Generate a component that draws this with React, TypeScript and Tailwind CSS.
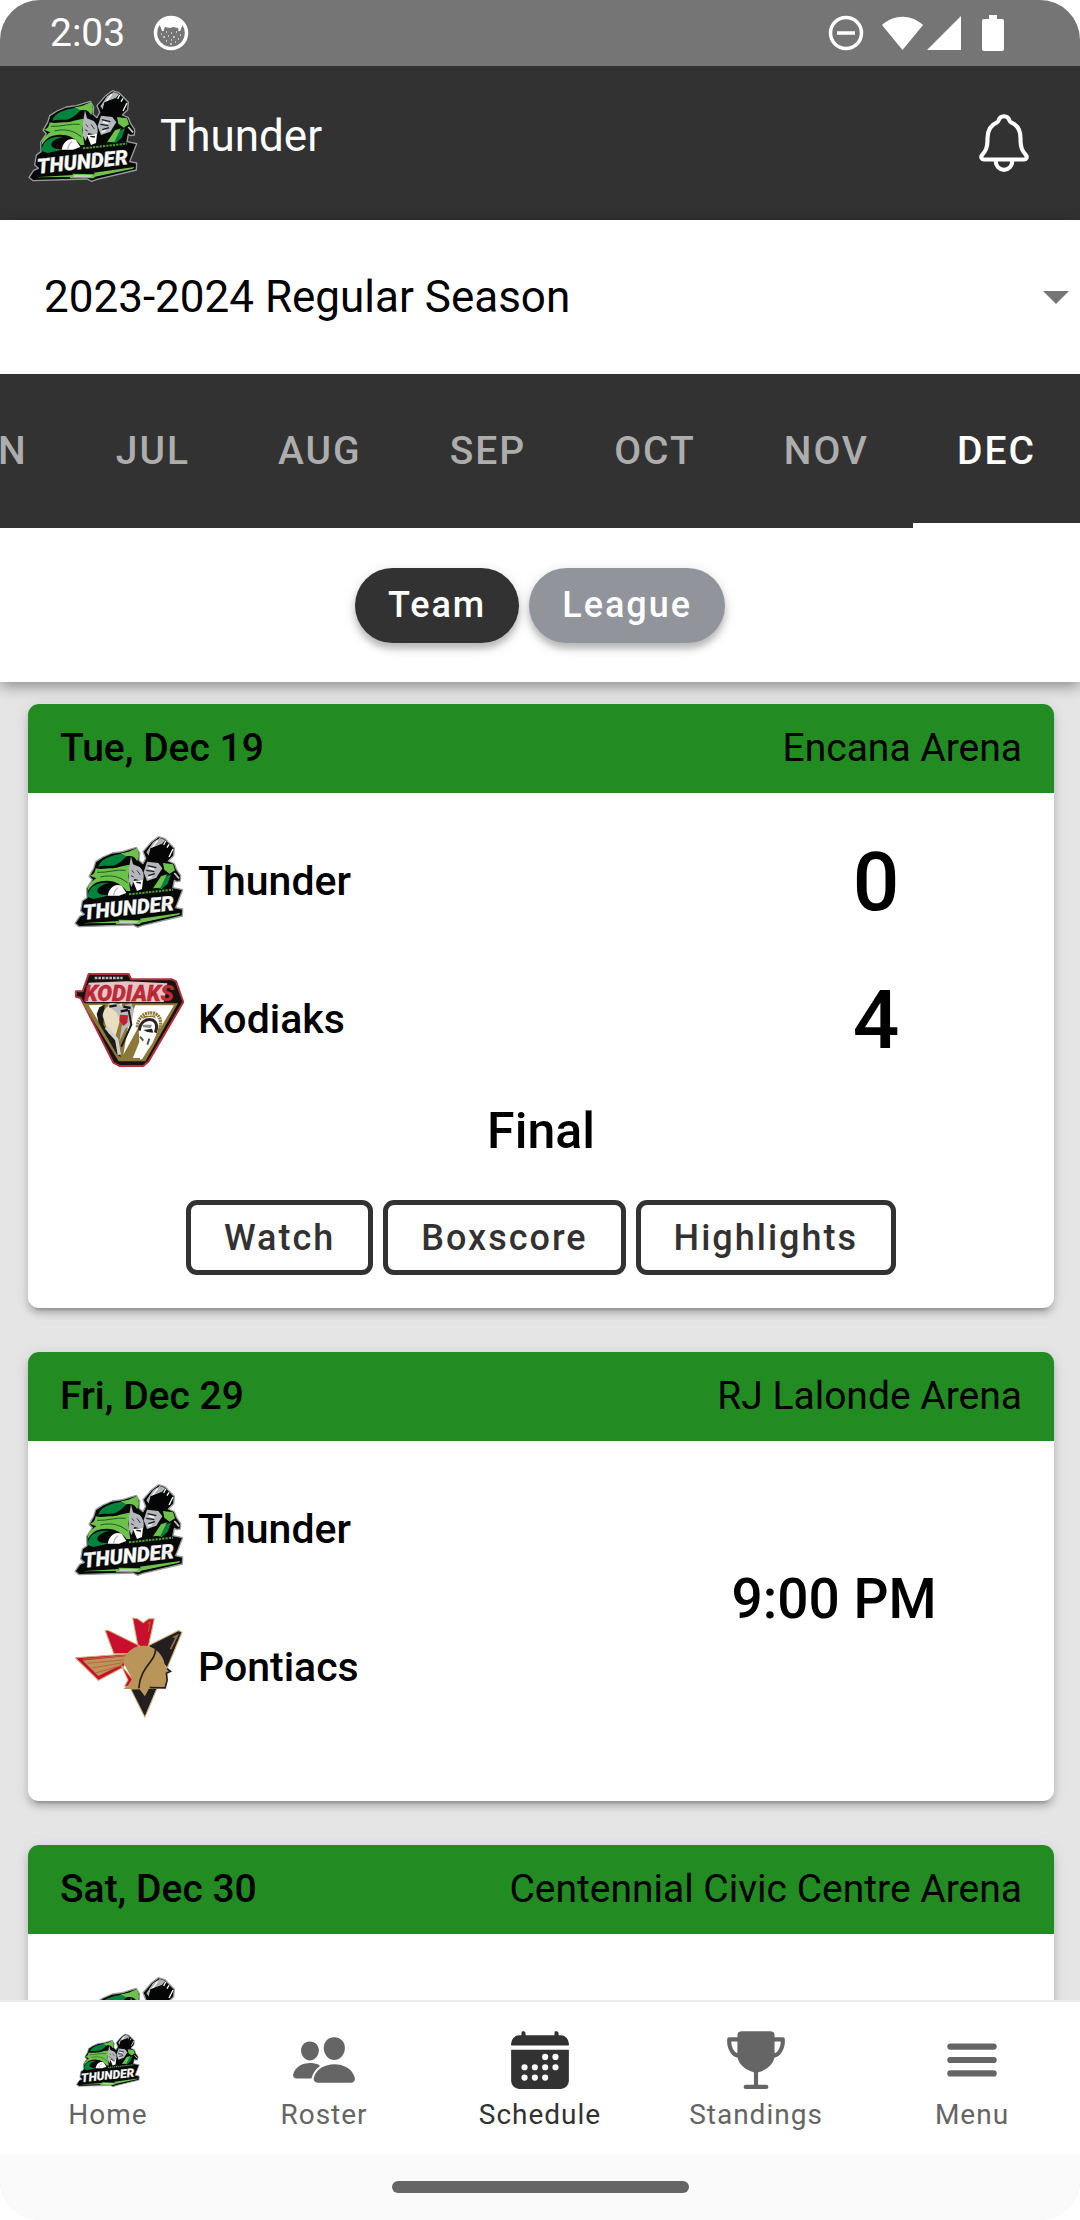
import { IoCalendar, IoMenu, IoNotificationsOutline, IoPeople, IoTrophy } from "react-icons/io5";
import type { ReactNode } from "react";

type LogoProps = { className: string };

function ThunderLogo({ className }: LogoProps) {
  return (
    <svg viewBox="25 28 330 280" className={className} role="img" aria-label="Thunder logo">
      <path
        d="M278 33L298 39L326 68L324 90L308 106L326 114L333 132L345 150L344 166L333 168L326 164L322 186L351 192L330 246L351 250L350 271L232 299L216 305L202 298L40 303L28 293L42 272L56 266L45 256L50 226L64 216L63 188L80 162L70 152L84 128L90 108L112 94L140 82L170 78L212 65L222 82L220 104L232 114L240 98L232 78L258 48Z"
        fill="#060806"
        stroke="#9a9da0"
        strokeWidth="4"
        strokeLinejoin="round"
      />
      <path d="M98 124C102 102 130 88 184 82L190 86C174 98 164 116 140 120C126 122 112 118 98 124Z" fill="#00843d" />
      <path d="M164 82C184 82 200 74 212 67C222 80 222 96 214 106C209 94 198 88 182 92Z" fill="#6cc24a" />
      <path
        d="M72 150C84 148 88 140 90 128C106 132 120 128 140 128C160 126 176 116 200 118L192 124L188 152L194 196L182 196C170 176 140 158 100 168C84 172 76 182 66 196C66 180 76 168 92 158Z"
        fill="#6cc24a"
      />
      <path d="M94 140C126 142 152 130 180 134M104 154C140 146 164 154 186 172" stroke="#1f5c22" strokeWidth="3" fill="none" />
      <path d="M66 214C66 186 92 168 130 172C100 178 90 192 98 202C106 210 120 206 126 210L84 220Z" fill="#00843d" />
      <path d="M126 210C130 186 148 172 168 180L182 202L160 210Z" fill="#fff" />
      <path d="M144 210C146 196 150 190 158 186" stroke="#b8bcc0" strokeWidth="4" fill="none" />
      <path d="M196 92L202 116L222 124C236 138 236 154 232 166L206 160L198 184L189 166L190 128Z" fill="#b4b8bc" />
      <path d="M202 166L232 163L229 190L214 196Z" fill="#fff" />
      <path d="M198 134L206 142M214 134L224 148M196 150L204 154" stroke="#333" strokeWidth="3" />
      <path d="M212 170L226 172" stroke="#111" strokeWidth="4" />
      <path d="M242 80L262 50L282 37L299 43L288 56L262 68L250 90Z" fill="#aeb2b6" />
      <path d="M276 44L252 76M300 46L294 58M310 56L304 66M322 70L310 94" stroke="#fff" strokeWidth="4" />
      <path d="M254 68L286 56L316 76L304 98L280 104L248 94Z" fill="#050505" />
      <path d="M244 108L278 112L290 128L272 156L244 166L234 140Z" fill="#b4b8bc" />
      <path d="M246 120L272 126M242 134L266 138M248 150L268 144" stroke="#1b1b1b" strokeWidth="4" />
      <path d="M250 127L266 131M246 157L258 153" stroke="#fff" strokeWidth="4" />
      <path d="M292 112L322 116L328 134L312 144L296 132Z" fill="#6cc24a" />
      <path d="M276 188L292 156L316 146L306 174L288 190Z" fill="#00843d" />
      <path d="M262 188L286 152L304 146L284 186Z" fill="#6cc24a" />
      <path d="M326 142L340 158" stroke="#c8ccd0" strokeWidth="5" />
      <path d="M190 206L322 192" stroke="#4f9a35" strokeWidth="6" strokeDasharray="7 3" />
      <text
        x="54"
        y="282"
        transform="rotate(-6 54 282)"
        fill="#fff"
        stroke="#c4c7ca"
        strokeWidth="1"
        className="font-['Roboto'] text-[62px] font-black italic"
      >
        THUNDER
      </text>
      <path d="M46 293L160 286L158 282L226 284L222 279L344 262L340 267L226 291L222 296L152 296L150 292Z" fill="#6cc24a" />
      <path d="M164 286L218 287L212 292L160 292Z" fill="#c8cbce" />
    </svg>
  );
}

function KodiaksLogo({ className }: LogoProps) {
  return (
    <svg viewBox="42 38 330 286" className={className} role="img" aria-label="Kodiaks logo">
      <path
        d="M86 44L206 44L214 60L336 60L348 66L370 128L266 306L250 320L178 320L160 310L62 116L48 112L48 96L68 96Z"
        fill="#17110f"
        stroke="#b3303c"
        strokeWidth="6"
        strokeLinejoin="round"
      />
      <path d="M104 56L188 56" stroke="#b9b9b9" strokeWidth="7" strokeDasharray="8 3" />
      <path d="M86 70L200 66L322 72L312 128L76 128Z" fill="#e8c4c6" />
      <text x="72" y="125" fill="#c52a38" stroke="#8d1c28" strokeWidth="1" className="font-['Roboto'] text-[66px] font-black italic">
        KODIAKS
      </text>
      <path d="M68 132L354 132L256 306L176 306Z" fill="#8d7838" />
      <path d="M86 138L128 136L116 168L124 200Z" fill="#fff" />
      <path d="M226 138L342 138L300 208L284 168L252 170L234 206L190 286L206 190Z" fill="#fff" />
      <path d="M118 144L134 136L130 196L148 224L174 252L182 294L170 284L116 190L110 164Z" fill="#1c1a17" />
      <path d="M128 170C130 146 148 134 168 138L186 132L184 168L166 232L146 222Z" fill="#e9dfc0" />
      <path d="M142 136C158 126 176 134 184 142L214 132L222 152L214 196L196 208L178 246L186 196L170 160Z" fill="#b9bbbd" />
      <path d="M148 142L170 138M190 142L212 146M182 156L204 152" stroke="#161616" strokeWidth="7" />
      <path d="M180 166L204 168L202 190L190 200L178 184Z" fill="#c3202f" />
      <path d="M138 204L170 240L178 286" stroke="#cfd0d2" strokeWidth="10" fill="none" />
      <path d="M206 152L214 196L184 262" stroke="#1c1a17" strokeWidth="6" fill="none" />
      <path d="M232 204C234 170 258 156 284 162C304 170 306 196 296 216" stroke="#8d7838" strokeWidth="10" fill="none" strokeDasharray="6 2" />
      <path d="M236 208C236 180 256 170 280 174C298 180 300 202 290 222L278 250L246 300L216 302L238 248Z" fill="#fff" />
      <path d="M238 214C240 188 258 176 278 182C292 190 292 206 286 220" fill="none" stroke="#2a2520" strokeWidth="9" />
      <path d="M246 196L276 196L272 206L250 204Z" fill="#8c8c8c" />
      <path d="M250 212L276 208L280 220L262 218Z" fill="#222" />
      <path d="M240 232L250 244M262 256L268 238" stroke="#555" strokeWidth="6" />
      <path d="M176 300L240 300" stroke="#8d7838" strokeWidth="8" />
    </svg>
  );
}

function PontiacsLogo({ className }: LogoProps) {
  return (
    <svg viewBox="46 54 326 306" className={className} role="img" aria-label="Pontiacs logo">
      <g stroke="#cfb078" strokeWidth="3" strokeLinejoin="round">
        <path d="M220 60L234 62L251 74L268 62L284 62L266 146L236 146Z" fill="#c8102e" />
        <path d="M138 96L150 98L240 142L206 166L164 166Z" fill="#c8102e" />
        <path d="M50 178L214 166L192 206L118 245Z" fill="#c8102e" />
        <path d="M186 200L220 242L206 264L196 262L206 244Z" fill="#c8102e" />
        <path d="M266 142L356 97L366 102L322 208L296 176Z" fill="#231f20" />
        <path d="M214 270L292 268L256 354Z" fill="#231f20" />
      </g>
      <path d="M72 186L210 172L188 198L118 232Z" fill="#ba955a" />
      <path d="M72 182L206 170M86 194L200 184M100 208L194 192M112 222L190 200" stroke="#c5603f" strokeWidth="3" />
      <path
        d="M192 192C198 158 226 140 256 142C284 144 304 164 312 186L316 204L330 216L320 224L322 242L316 268L270 266L256 292L240 270L192 270L212 254L218 240Z"
        fill="#ba955a"
      />
      <path d="M322 210L332 218L320 224L322 244L316 267L270 266" fill="none" stroke="#231f20" strokeWidth="5" />
      <path d="M288 150C290 188 242 204 238 268" fill="none" stroke="#231f20" strokeWidth="5" />
      <path d="M340 118L352 112L332 152" fill="none" stroke="#8d7442" strokeWidth="5" />
      <path d="M264 76L272 72L266 100" fill="none" stroke="#b3622e" strokeWidth="3" />
    </svg>
  );
}

const logos = { Thunder: ThunderLogo, Kodiaks: KodiaksLogo, Pontiacs: PontiacsLogo };

type Team = { name: keyof typeof logos; score?: number };
type Game = { date: string; arena: string; teams: Team[]; status?: string; time?: string; actions?: string[] };

const games: Game[] = [
  {
    date: "Tue, Dec 19",
    arena: "Encana Arena",
    teams: [
      { name: "Thunder", score: 0 },
      { name: "Kodiaks", score: 4 },
    ],
    status: "Final",
    actions: ["Watch", "Boxscore", "Highlights"],
  },
  { date: "Fri, Dec 29", arena: "RJ Lalonde Arena", teams: [{ name: "Thunder" }, { name: "Pontiacs" }], time: "9:00 PM" },
  { date: "Sat, Dec 30", arena: "Centennial Civic Centre Arena", teams: [{ name: "Thunder" }] },
];

function StatusBar() {
  return (
    <div className="flex h-[66px] shrink-0 items-center bg-[#757575] pr-[76px] pl-[50px] text-white">
      <span className="text-[39px]">2:03</span>
      <svg viewBox="0 0 36 36" className="ml-7 size-9">
        <circle cx="18" cy="18" r="15.5" fill="none" stroke="#fff" strokeWidth="3.5" />
        <path d="M6 9C11 2 25 2 30 9L27 16L25 13L20 12L17 13L12 12L10 16Z" fill="#fff" />
        <path d="M8 10L10 16M28 10L26 16" stroke="#fff" strokeWidth="2" />
        <path
          d="M8 19h1M13 17h1M18 18h1M23 17h1M27 20h1M10 22h2M15 21h1M20 22h2M25 24h1M13 26h1M18 25h1M22 27h1M17 29h2"
          stroke="#ddd"
          strokeWidth="1.5"
        />
      </svg>
      <svg viewBox="0 0 36 36" className="ml-auto size-9">
        <circle cx="18" cy="18" r="15.5" fill="none" stroke="#fff" strokeWidth="3.5" />
        <path d="M9 18H27" stroke="#fff" strokeWidth="3.5" />
      </svg>
      <svg viewBox="0 0 80 36" className="ml-[18px] h-9 w-20">
        <path d="M0 10C12 -1 29 -1 41 10L20.5 35Z" fill="#fff" />
        <path d="M79 1V35H45Z" fill="#fff" />
      </svg>
      <svg viewBox="0 0 22 36" className="ml-5 h-9 w-[22px]">
        <path d="M7 0H15V4H20Q22 4 22 6V34Q22 36 20 36H2Q0 36 0 34V6Q0 4 2 4H7Z" fill="#fff" />
      </svg>
    </div>
  );
}

function GameCard({ game }: { game: Game }) {
  return (
    <article className="overflow-hidden rounded-[11px] bg-white shadow-[0_8px_3px_-6px_rgba(0,0,0,0.2),0_6px_6px_0_rgba(0,0,0,0.14),0_3px_14px_0_rgba(0,0,0,0.12)]">
      <header className="flex h-[89px] items-center justify-between bg-[#228b22] px-8 text-[39px]">
        <h2 className="font-medium">{game.date}</h2>
        <span>{game.arena}</span>
      </header>
      <div className="flex items-center px-11 pt-5">
        <ul className="flex-1">
          {game.teams.map((team) => {
            const Logo = logos[team.name];
            return (
              <li key={team.name} className="flex h-[138px] items-center">
                <Logo className="ml-[2px] w-[110px]" />
                <span className="ml-[14px] text-[41px] font-medium">{team.name}</span>
                {team.score !== undefined && (
                  <span className="ml-auto w-2/7 text-center text-[82px] leading-none font-medium">{team.score}</span>
                )}
              </li>
            );
          })}
        </ul>
        {game.time && <span className="w-3/8 text-center text-[55px] font-medium">{game.time}</span>}
      </div>
      {game.status && <p className="mb-[27px] text-center text-[50px] leading-[84px] font-medium">{game.status}</p>}
      {game.actions ? (
        <div className="flex justify-center gap-[10px] pb-[33px]">
          {game.actions.map((action) => (
            <button
              key={action}
              className="h-[75px] rounded-[11px] border-[5px] border-[#323232] px-[33px] text-[36px] leading-none font-medium tracking-[2px] text-[#323232]"
            >
              {action}
            </button>
          ))}
        </div>
      ) : (
        <div className="h-16" />
      )}
    </article>
  );
}

function NavItem({ label, active, children }: { label: string; active?: boolean; children: ReactNode }) {
  return (
    <a
      href={"#" + label.toLowerCase()}
      aria-current={active ? "page" : undefined}
      className={"flex flex-1 flex-col items-center pt-[25px] " + (active ? "text-[#323232]" : "text-[#656565]")}
    >
      <span className="flex size-[66px] items-center justify-center text-[66px]">{children}</span>
      <span className="mt-1 text-[28px] leading-9 tracking-[1px]">{label}</span>
    </a>
  );
}

export default function App() {
  const months = ["JUN", "JUL", "AUG", "SEP", "OCT", "NOV", "DEC"];
  return (
    <div className="h-screen bg-white">
      <div className="flex h-full flex-col overflow-hidden rounded-[40px] bg-[#e5e5e5] font-['Roboto',sans-serif] text-black">
        <StatusBar />
        <header className="flex h-[154px] shrink-0 items-center justify-between bg-[#323232] pr-[43px] pl-7 text-white">
          <div className="flex items-center gap-[22px] pb-[14px]">
            <ThunderLogo className="w-[110px]" />
            <h1 className="text-[44px]">Thunder</h1>
          </div>
          <button aria-label="Notifications" className="text-[66px]">
            <IoNotificationsOutline />
          </button>
        </header>

        <div className="relative z-10 shrink-0 bg-white shadow-[0_4px_14px_rgba(0,0,0,0.4)]">
          <div className="grid items-center">
            <select
              aria-label="Season"
              className="col-start-1 row-start-1 h-[154px] w-full appearance-none bg-white pr-16 pl-11 text-[44px] text-black"
            >
              <option>2023-2024 Regular Season</option>
            </select>
            <svg viewBox="0 0 26 13" className="pointer-events-none col-start-1 row-start-1 mr-[11px] h-[13px] w-[26px] justify-self-end">
              <path d="M0 0H26L13 13Z" fill="#757575" />
            </svg>
          </div>
          <div role="tablist" className="flex h-[154px] justify-end overflow-hidden bg-[#323232]">
            {months.map((month) => (
              <button
                key={month}
                role="tab"
                aria-selected={month === "DEC"}
                className={
                  "shrink-0 px-11 text-[39px] font-medium tracking-[2px] " +
                  (month === "DEC" ? "text-white shadow-[inset_0_-5px_0_#ffffff]" : "text-[#adadad]")
                }
              >
                {month}
              </button>
            ))}
          </div>
          <div className="flex h-[154px] items-center justify-center gap-[10px]">
            <button className="h-[75px] rounded-full bg-[#323232] px-[33px] text-[36px] leading-none font-medium tracking-[2px] text-white shadow-[0_6px_6px_rgba(0,0,0,0.2),0_3px_14px_rgba(0,0,0,0.14)]">
              Team
            </button>
            <button className="h-[75px] rounded-full bg-[#92949c] px-[33px] text-[36px] leading-none font-medium tracking-[2px] text-white shadow-[0_6px_6px_rgba(0,0,0,0.2),0_3px_14px_rgba(0,0,0,0.14)]">
              League
            </button>
          </div>
        </div>

        <main className="flex min-h-0 flex-1 flex-col gap-11 overflow-hidden pt-[22px] pr-[26px] pl-7">
          {games.map((game) => (
            <div key={game.date} className="shrink-0">
              <GameCard game={game} />
            </div>
          ))}
        </main>

        <nav className="relative flex h-[154px] shrink-0 border-t-2 border-[#ededed] bg-white">
          <NavItem label="Home">
            <ThunderLogo className="w-16" />
          </NavItem>
          <NavItem label="Roster">
            <IoPeople />
          </NavItem>
          <NavItem label="Schedule" active>
            <IoCalendar />
          </NavItem>
          <NavItem label="Standings">
            <IoTrophy />
          </NavItem>
          <NavItem label="Menu">
            <IoMenu />
          </NavItem>
        </nav>
        <div className="flex h-[66px] shrink-0 items-center justify-center bg-[#fafafa]">
          <div className="h-3 w-[297px] rounded-full bg-[#656565]" />
        </div>
      </div>
    </div>
  );
}
